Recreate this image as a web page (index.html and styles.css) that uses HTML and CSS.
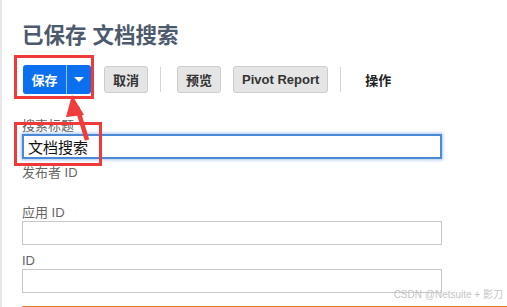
FILE: index.html
```html
<!DOCTYPE html>
<html lang="zh-CN">
<head>
    <meta charset="UTF-8">
    <title>已保存 文档搜索</title>
    <link rel="stylesheet" href="styles.css">
</head>
<body>
<div class="page">
    <h1 class="title">已保存 文档搜索</h1>
    <div class="toolbar">
        <div class="btnSave">
            <span class="saveText">保存</span>
            <span class="saveMenu"><i class="caret"></i></span>
        </div>
        <a href="javascript:;" class="btn">取消</a>
        <span class="sep"></span>
        <a href="javascript:;" class="btn">预览</a>
        <a href="javascript:;" class="btn">Pivot Report</a>
        <span class="sep"></span>
        <span class="action">操作</span>
    </div>

    <div class="field">
        <label>搜索标题</label>
        <input type="text" class="inp focus" value="文档搜索">
    </div>
    <div class="field field-empty">
        <label>发布者 ID</label>
    </div>
    <div class="field">
        <label>应用 ID</label>
        <input type="text" class="inp">
    </div>
    <div class="field">
        <label>ID</label>
        <input type="text" class="inp">
    </div>
    <div class="bar"></div>

    <!-- 标注 -->
    <div class="mark mark1"></div>
    <div class="mark mark2"></div>
    <svg class="arrow" width="40" height="60" viewBox="0 0 40 60">
        <path d="M30 45 L20 12" stroke="#f23b3b" stroke-width="4.5" fill="none"/>
        <polygon points="15,0 27,20 9,22" fill="#f23b3b"/>
    </svg>
    <div class="wm">CSDN @Netsuite + 影刀</div>
</div>
</body>
</html>
```

FILE: styles.css
```css
*{
    margin: 0;
    padding: 0;
    box-sizing: border-box;
}
body{
    background: #fff;
    font-family: "Liberation Sans", Arial, "Noto Sans CJK SC", sans-serif;
    color: #333;
}
a{
    text-decoration: none;
}
.page{
    position: relative;
    height: 307px;
    overflow: hidden;
    border-left: 2px solid #e8e8e8;
    padding: 24px 0 0 20px;
}
.title{
    font-size: 21.5px;
    font-weight: bold;
    color: #4d5a6e;
    line-height: 24px;
    height: 24px;
}
.toolbar{
    display: flex;
    align-items: center;
    margin-top: 17px;
    height: 29px;
}
.btnSave{
    display: flex;
    width: 68px;
    height: 29px;
    background: #0a70f0;
    border-radius: 3px;
    color: #fff;
    font-size: 13px;
    font-weight: bold;
    margin-left: 1px;
}
.saveText{
    width: 44px;
    display: flex;
    justify-content: center;
    align-items: center;
    border-right: 1px solid #9ec4f7;
}
.saveMenu{
    flex: 1;
    display: flex;
    justify-content: center;
    align-items: center;
}
.caret{
    width: 0;
    height: 0;
    border-left: 5px solid transparent;
    border-right: 5px solid transparent;
    border-top: 5px solid #fff;
}
.btn{
    height: 27px;
    padding: 0 8px;
    display: flex;
    align-items: center;
    background: #e5e5e5;
    border: 1px solid #cdcdcd;
    border-radius: 3px;
    color: #333;
    font-size: 13px;
    font-weight: bold;
    margin-left: 12px;
}
.btnSave + .btn{
    margin-left: 13px;
}
.sep{
    width: 1px;
    height: 25px;
    background: #d4d4d4;
    margin: 0 4px 0 12px;
}
.action{
    margin-left: 20px;
    font-size: 13px;
    font-weight: bold;
    color: #222;
}
.field{
    width: 420px;
    margin-top: 8px;
}
.toolbar + .field{
    margin-top: 24px;
}
.field label{
    display: block;
    font-size: 13px;
    line-height: 15px;
    color: #666;
    margin-bottom: 1px;
}
.field-empty{
    height: 32px;
    margin-top: 6px;
}
.inp{
    display: block;
    width: 420px;
    height: 24px;
    border: 1px solid #c8c8c8;
    outline: none;
    padding: 0 4px;
    font-size: 15px;
    font-family: "Liberation Sans", Arial, "Noto Sans CJK SC", sans-serif;
    color: #111;
}
.inp.focus{
    height: 25px;
    border: 2px solid #4a89d6;
    box-shadow: 0 0 3px 1px #a9c9f0;
}
.bar{
    margin-top: 13px;
    width: 600px;
    height: 4px;
    background: #e07b2e;
}
.mark{
    position: absolute;
    border: 3px solid #f03a3a;
}
.mark1{
    left: 12px;
    top: 55px;
    width: 80px;
    height: 44px;
}
.mark2{
    left: 12px;
    top: 122px;
    width: 88px;
    height: 44px;
}
.arrow{
    position: absolute;
    left: 55px;
    top: 95px;
}
.wm{
    position: absolute;
    right: 4px;
    bottom: 6px;
    font-size: 10px;
    color: #c4c4c4;
}
```
